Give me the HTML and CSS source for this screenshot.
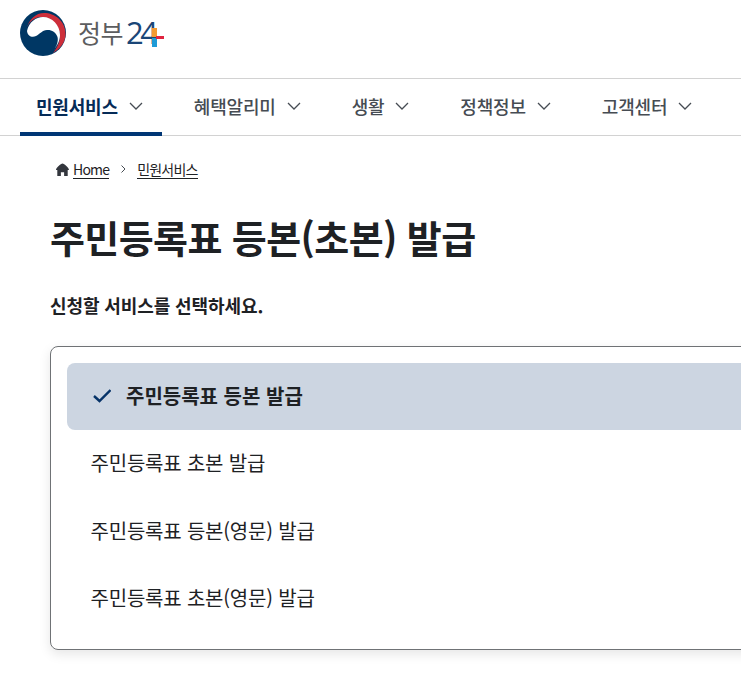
FILE: index.html
```html
<!DOCTYPE html>
<html lang="ko">
<head>
  <meta charset="UTF-8" />
  <title>주민등록표 등본(초본) 발급</title>
  <link rel="stylesheet" href="styles.css">
</head>
<body>

  <!-- Logo -->
  <header class="top-bar">
    <a class="logo" href="#">
      <svg class="logo-mark" width="54" height="54" viewBox="0 0 54 54">
        <circle cx="27" cy="27" r="23" fill="#003764"/>
        <path d="M10.500 23C13 13 20 7 28 7C39 7 49 15 49.500 27C50 36 44 43 37 47C42 41 44.500 34 44 28C42 17 33 11 25 11C18 11 12 17 10.500 23Z" fill="#cd2e3a"/>
        <path d="M11 25C13 16 20 11 27 11C36 11 44 19 44 29C44 35 41 40 37 45C41 40 42.500 35 41.500 31C40 26 35 23.500 31 24C26 24.500 24 28 20 30C16 32 11.500 30 11 25Z" fill="#fff"/>
      </svg>
      <span class="logo-name">정부</span>
      <span class="logo-num">24</span>
      <svg class="logo-plus" width="12" height="19" viewBox="0 0 12 19">
        <rect x="0" y="0" width="5" height="9" fill="#f39a32"/>
        <rect x="0" y="10" width="5" height="9" fill="#1e9bd7"/>
        <rect x="4" y="8" width="8" height="3" fill="#e0243f"/>
      </svg>
    </a>
  </header>

  <!-- Main menu -->
  <nav class="main-nav">
    <a class="nav-item active" href="#">민원서비스
      <svg class="chevron" width="14" height="8" viewBox="0 0 14 8"><path d="M1 1l6 6 6-6"/></svg>
    </a>
    <a class="nav-item" href="#">혜택알리미
      <svg class="chevron" width="14" height="8" viewBox="0 0 14 8"><path d="M1 1l6 6 6-6"/></svg>
    </a>
    <a class="nav-item" href="#">생활
      <svg class="chevron" width="14" height="8" viewBox="0 0 14 8"><path d="M1 1l6 6 6-6"/></svg>
    </a>
    <a class="nav-item" href="#">정책정보
      <svg class="chevron" width="14" height="8" viewBox="0 0 14 8"><path d="M1 1l6 6 6-6"/></svg>
    </a>
    <a class="nav-item" href="#">고객센터
      <svg class="chevron" width="14" height="8" viewBox="0 0 14 8"><path d="M1 1l6 6 6-6"/></svg>
    </a>
  </nav>

  <main class="content">
    <div class="breadcrumb">
      <svg class="home-icon" width="13" height="13" viewBox="0 0 12 12"><path d="M6 .5C4.500 .5 0 4.500 0 6.500h1.200V12h3.300V8.500h3V12h3.300V6.500H12C12 4.500 7.500 .5 6 .5z"/></svg>
      <a href="#">Home</a>
      <svg class="crumb-sep" width="5" height="8" viewBox="0 0 5 8"><path d="M.5.500L4 4 .5 7.500"/></svg>
      <a href="#">민원서비스</a>
    </div>

    <h1>주민등록표 등본(초본) 발급</h1>
    <p class="lead">신청할 서비스를 선택하세요.</p>

    <!-- Service list -->
    <ul class="service-list">
      <li class="service selected">
        <svg class="check" width="18" height="14" viewBox="0 0 18 14"><path d="M1 7l5.500 5L17.500 1"/></svg>
        주민등록표 등본 발급
      </li>
      <li class="service">주민등록표 초본 발급</li>
      <li class="service">주민등록표 등본(영문) 발급</li>
      <li class="service">주민등록표 초본(영문) 발급</li>
    </ul>
  </main>

</body>
</html>
```

FILE: styles.css
```css
* { margin: 0; padding: 0; box-sizing: border-box; }

html, body {
  height: 100%;
  overflow: hidden;
  background: #fff;
  color: #1e2124;
  font-family: "Noto Sans CJK KR", "Noto Sans", sans-serif;
}

a { color: inherit; text-decoration: none; }

.top-bar {
  height: 79px;
  padding: 6px 0 0 16px;
  border-bottom: 1px solid #d2d2d2;
}

.logo {
  display: flex;
  align-items: center;
  height: 54px;
}

.logo-name {
  margin: 0 0 2px 8px;
  font-size: 25px;
  color: #5c5d5f;
  letter-spacing: -0.5px;
}

.logo-num {
  margin: 0 0 2px 3px;
  font-family: "Open Sans", sans-serif;
  font-size: 31px;
  color: #1a4677;
  letter-spacing: -3.500px;
}

.logo-plus { margin: 9px 0 0 -2px; }

.main-nav {
  display: flex;
  gap: 16px;
  height: 57px;
  padding-left: 20px;
  border-bottom: 1px solid #d2d2d2;
}

.nav-item {
  display: flex;
  align-items: center;
  gap: 11px;
  height: 57px;
  padding: 0 19px 4px 16px;
  font-size: 18px;
  font-weight: 500;
  letter-spacing: -0.2px;
  color: #464c53;
}

.nav-item.active {
  color: #052b57;
  font-weight: 700;
  border-bottom: 4px solid #003675;
  padding-bottom: 0;
}

.chevron {
  fill: none;
  stroke: #464c53;
  stroke-width: 1.300;
}

.content { padding: 0 0 0 50px; }

.breadcrumb {
  display: flex;
  align-items: center;
  height: 20px;
  margin: 23px 0 0 6px;
  font-size: 14px;
  letter-spacing: -0.8px;
}

.breadcrumb a {
  line-height: 18px;
  border-bottom: 1px solid #1e2124;
}

.home-icon { fill: #33363d; margin-right: 4px; }

.crumb-sep {
  fill: none;
  stroke: #464c53;
  margin: 0 11px 0 12px;
}

h1 {
  margin-top: 31px;
  font-size: 38px;
  line-height: 54px;
  font-weight: 700;
  color: #1e2124;
  letter-spacing: -0.6px;
}

.lead {
  margin-top: 28px;
  font-size: 18px;
  line-height: 26px;
  font-weight: 700;
  letter-spacing: -0.1px;
}

.service-list {
  list-style: none;
  width: 800px;
  margin-top: 28px;
  padding: 16px 16px 17px;
  border: 1px solid #6f7275;
  border-radius: 8px;
  box-shadow: 0 4px 12px rgba(0, 0, 0, 0.1);
}

.service {
  display: flex;
  align-items: center;
  gap: 15px;
  height: 67.330px;
  padding: 0 0 2px 23.500px;
  font-size: 20px;
  letter-spacing: -0.2px;
}

.service.selected {
  padding-left: 26px;
  background: #ccd5e1;
  border-radius: 8px 0 0 8px;
  font-weight: 700;
  letter-spacing: 0;
}

.check {
  fill: none;
  stroke: #063368;
  stroke-width: 2.400;
}
```
